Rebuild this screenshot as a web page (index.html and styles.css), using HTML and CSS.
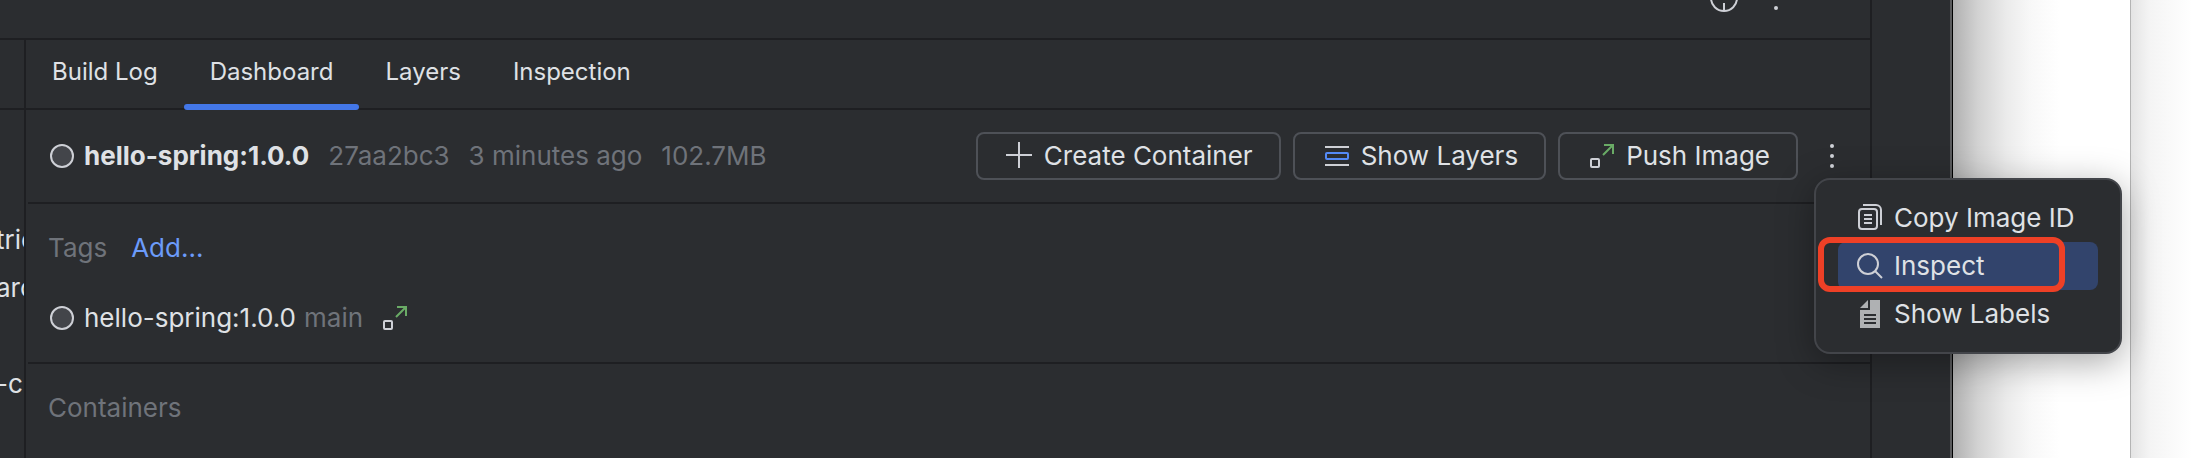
FILE: index.html
```
<!DOCTYPE html>
<html lang="en">
<head>
  <meta charset="UTF-8" />
  <meta name="viewport" content="width=device-width, initial-scale=1.0"/>
  <title>Docker image - hello-spring:1.0.0</title>
  <link rel="stylesheet" href="styles.css">
</head>
<body>
  <svg class="sprite" aria-hidden="true">
    <symbol id="icon-image" viewBox="0 0 32 32">
      <circle cx="16" cy="16" r="11" fill="#43454a" stroke="#ced0d6" stroke-width="2"/>
    </symbol>
    <symbol id="icon-push" viewBox="0 0 32 32">
      <rect x="5" y="19" width="8" height="8" rx="1" fill="none" stroke="#ced0d6" stroke-width="2"/>
      <path d="M17 15 27 5M18 5h9v9" fill="none" stroke="#6aab66" stroke-width="2"/>
    </symbol>
    <symbol id="icon-more" viewBox="0 0 32 32">
      <g fill="#ced0d6">
        <circle cx="16" cy="6" r="2"/>
        <circle cx="16" cy="16" r="2"/>
        <circle cx="16" cy="26" r="2"/>
      </g>
    </symbol>
  </svg>

  <div class="desktop">
    <div class="ide">
      <header class="tool-header">
        <button class="icon-button" aria-label="Select opened file">
          <svg class="icon" viewBox="0 0 32 32">
            <g fill="none" stroke="#ced0d6" stroke-width="2">
              <circle cx="16" cy="16" r="13"/>
              <path d="M16 2v8M16 21v8M2 16h8M22 16h8"/>
            </g>
          </svg>
        </button>
        <button class="icon-button" aria-label="Options">
          <svg class="icon"><use href="#icon-more"/></svg>
        </button>
      </header>

      <aside class="service-tree" aria-label="Services">
        <div class="tree-head"></div>
        <ul class="tree-list">
          <li>tric</li>
          <li>arc</li>
          <li></li>
          <li>-cr</li>
        </ul>
      </aside>

      <main class="content">
        <nav class="tabs" aria-label="Image views">
          <button class="tab">Build Log</button>
          <button class="tab active" aria-current="page">Dashboard</button>
          <button class="tab">Layers</button>
          <button class="tab">Inspection</button>
        </nav>

        <section class="image-bar">
          <svg class="icon"><use href="#icon-image"/></svg>
          <h1 class="image-name">hello-spring:1.0.0</h1>
          <span class="meta">27aa2bc3</span>
          <span class="meta">3 minutes ago</span>
          <span class="meta">102.7MB</span>

          <div class="actions">
            <button class="action">
              <svg class="icon" viewBox="0 0 32 32">
                <path d="M15 2v26M2 15h26" stroke="#ced0d6" stroke-width="2"/>
              </svg>
              Create Container
            </button>
            <button class="action">
              <svg class="icon" viewBox="0 0 32 32">
                <path d="M4 7h24M4 25h24" stroke="#ced0d6" stroke-width="2"/>
                <rect x="5" y="13" width="22" height="6" rx="1" fill="none" stroke="#548af7" stroke-width="2"/>
              </svg>
              Show Layers
            </button>
            <button class="action">
              <svg class="icon"><use href="#icon-push"/></svg>
              Push Image
            </button>
          </div>

          <div class="more">
            <button class="icon-button" aria-label="More actions" aria-haspopup="menu" aria-expanded="true">
              <svg class="icon"><use href="#icon-more"/></svg>
            </button>
            <div class="menu" role="menu">
              <button class="menu-item" role="menuitem">
                <svg class="icon" viewBox="0 0 32 32">
                  <g fill="none" stroke="#ced0d6" stroke-width="2">
                    <rect x="5" y="7" width="18" height="20" rx="3"/>
                    <path d="M9 3h13a5 5 0 0 1 5 5v15"/>
                    <path d="M10 13h8M10 17h8M10 21h8"/>
                  </g>
                </svg>
                Copy Image ID
              </button>
              <button class="menu-item selected" role="menuitem">
                <svg class="icon" viewBox="0 0 32 32">
                  <g fill="none" stroke="#ced0d6" stroke-width="2">
                    <circle cx="14" cy="14" r="10"/>
                    <path d="m21 21 7 7"/>
                  </g>
                </svg>
                Inspect
                <span class="highlight"></span>
              </button>
              <button class="menu-item" role="menuitem">
                <svg class="icon" viewBox="0 0 32 32">
                  <path d="M14 2v8H6zM16 2h10v28H6V12h10z" fill="#afb1b3"/>
                  <path d="M10 17h12M10 21h12M10 25h12" stroke="#2b2d30" stroke-width="2"/>
                </svg>
                Show Labels
              </button>
            </div>
          </div>
        </section>

        <section class="tags">
          <div class="tags-head">
            <h2 class="section-title">Tags</h2>
            <a class="link" href="#add">Add...</a>
          </div>
          <div class="tag-row">
            <svg class="icon"><use href="#icon-image"/></svg>
            <span>hello-spring:1.0.0</span>
            <span class="branch">main</span>
            <button class="icon-button push" aria-label="Push tag">
              <svg class="icon"><use href="#icon-push"/></svg>
            </button>
          </div>
        </section>

        <section class="containers">
          <h2 class="section-title">Containers</h2>
        </section>
      </main>

      <div class="stripe"></div>
    </div>

    <div class="window-behind"></div>
    <div class="window-edge"></div>
  </div>
</body>
</html>
```

FILE: styles.css
```
:root {
  --bg: #2b2d30;
  --line: #1e1f22;
  --text: #dfe1e5;
  --muted: #6f737a;
  --border: #4e5157;
  --accent: #4377e8;
  --link: #6b9bfa;
  --selection: #32446c;
  --mark: #ee4026;
}

* {
  box-sizing: border-box;
}

body {
  margin: 0;
  background: #fff;
  color: var(--text);
  font: 26px/32px Inter, sans-serif;
  overflow: hidden;
}

button {
  padding: 0;
  border: none;
  background: none;
  color: inherit;
  font: inherit;
  cursor: pointer;
}

h1,
h2 {
  margin: 0;
  font-size: inherit;
}

.sprite {
  display: none;
}

.icon {
  display: block;
  flex: none;
  width: 32px;
  height: 32px;
}

.icon-button {
  display: block;
  flex: none;
}

.desktop {
  display: grid;
  grid-template-columns: 1fr 177px 62px;
  height: 100vh;
}

.ide {
  display: grid;
  grid-template-columns: 26px 1fr 80px;
  grid-template-rows: 40px 1fr;
  background: var(--bg);
  border-right: 1px solid #000;
}

.tool-header {
  grid-column: 1 / 3;
  display: flex;
  justify-content: flex-end;
  align-items: flex-end;
  gap: 20px;
  padding: 0 78px 24px 0;
  border-right: 2px solid var(--line);
  border-bottom: 2px solid var(--line);
}

.service-tree {
  grid-row: 2;
  border-right: 2px solid var(--line);
  overflow: hidden;
}

.tree-head {
  height: 70px;
  border-bottom: 2px solid var(--line);
}

.tree-list {
  margin: 0 0 0 -4px;
  padding: 106px 0 0;
  list-style: none;
  line-height: 48px;
  white-space: nowrap;
}

.tree-list li {
  height: 48px;
}

.content {
  grid-row: 2;
  min-width: 0;
  border-right: 2px solid var(--line);
}

.tabs {
  display: flex;
  height: 70px;
  border-bottom: 2px solid var(--line);
  font-size: 24px;
}

.tab {
  position: relative;
  padding: 0 26px 4px;
}

.tab.active::after {
  content: "";
  position: absolute;
  left: 0;
  right: 0;
  bottom: -2px;
  height: 6px;
  border-radius: 3px;
  background: var(--accent);
}

.image-bar {
  display: flex;
  align-items: center;
  height: 94px;
  margin-left: 2px;
  padding: 0 22px 0 18px;
  border-bottom: 2px solid var(--line);
}

.image-name {
  margin-left: 6px;
  font-weight: 700;
}

.meta {
  margin-left: 19px;
  color: var(--muted);
  white-space: nowrap;
}

.actions {
  display: flex;
  gap: 12px;
  margin-left: auto;
}

.action {
  display: flex;
  align-items: center;
  gap: 8px;
  height: 48px;
  padding: 0 26px;
  border: 2px solid var(--border);
  border-radius: 8px;
  white-space: nowrap;
}

.more {
  position: relative;
  margin-left: 18px;
}

.menu {
  position: absolute;
  top: 38px;
  left: -2px;
  z-index: 2;
  width: 308px;
  padding: 14px 22px;
  border: 2px solid #43454a;
  border-radius: 16px;
  background: var(--bg);
  box-shadow: 0 8px 36px rgba(0, 0, 0, 0.35);
}

.menu-item {
  position: relative;
  display: flex;
  align-items: center;
  gap: 8px;
  width: 100%;
  height: 48px;
  padding: 0 16px;
  border-radius: 8px;
  white-space: nowrap;
}

.menu-item.selected {
  background: var(--selection);
}

.highlight {
  position: absolute;
  top: -5px;
  bottom: -2px;
  left: -20px;
  right: 33px;
  border: 6px solid var(--mark);
  border-radius: 12px;
}

.tags {
  height: 160px;
  margin-left: 2px;
  padding: 28px 20px 0;
  border-bottom: 2px solid var(--line);
}

.tags-head {
  display: flex;
  gap: 24px;
}

.section-title {
  color: var(--muted);
  font-weight: 400;
}

.link {
  color: var(--link);
  text-decoration: none;
}

.tag-row {
  display: flex;
  align-items: center;
  gap: 6px;
  margin: 38px 0 0 -2px;
}

.branch {
  margin-left: 2px;
  color: var(--muted);
}

.push {
  margin-left: 10px;
}

.containers {
  margin-left: 2px;
  padding: 28px 20px;
}

.stripe {
  grid-row: 1 / 3;
  grid-column: 3;
  border-right: 2px solid #5a5b5d;
}

.window-behind {
  background: linear-gradient(to right, #b0b0b0, #d2d2d2 14%, #ebebeb 30%, #f8f8f8 44%, #fff 60%);
}

.window-edge {
  border-left: 1px solid #b4b4b4;
  background: linear-gradient(to right, #e4e4e4, #f4f4f4 30%, #fff);
}
```
